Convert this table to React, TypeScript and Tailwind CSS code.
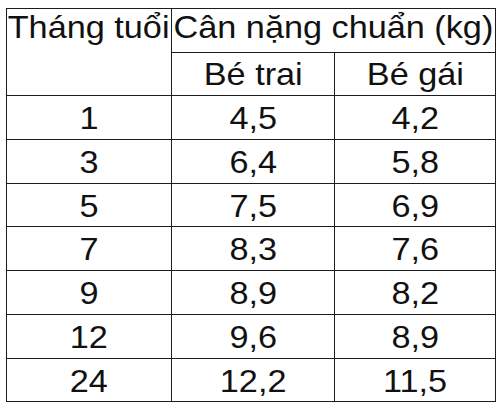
const rows: [string, string, string][] = [
  ['1', '4,5', '4,2'],
  ['3', '6,4', '5,8'],
  ['5', '7,5', '6,9'],
  ['7', '8,3', '7,6'],
  ['9', '8,9', '8,2'],
  ['12', '9,6', '8,9'],
  ['24', '12,2', '11,5'],
];

function Txt({ children }: { children: React.ReactNode }) {
  return <span className="inline-block origin-center scale-x-[1.07] whitespace-nowrap leading-none">{children}</span>;
}

export default function App() {
  return (
    <div className="h-[409px] w-[500px] bg-white pl-[6px] pt-[8px] font-['Liberation_Sans',Arial,sans-serif] text-[32px] text-[#111]">
      <div className="grid w-[490px] grid-cols-[164px_162px_160px] grid-rows-[43px_42px_43px_43px_42px_43px_43px_43px_42px] gap-px border border-[#1c1c1c] bg-[#1c1c1c]">
        <div className="row-span-2 flex justify-center bg-white pt-[2px]">
          <Txt>Tháng tuổi</Txt>
        </div>
        <div className="col-span-2 flex justify-center bg-white pt-[2px]">
          <Txt>Cân nặng chuẩn (kg)</Txt>
        </div>
        <div className="flex items-center justify-center bg-white">
          <Txt>Bé trai</Txt>
        </div>
        <div className="flex items-center justify-center bg-white">
          <Txt>Bé gái</Txt>
        </div>
        {rows.map((r) =>
          r.map((v, i) => (
            <div key={r[0] + '-' + i} className="flex items-center justify-center bg-white pt-px">
              <Txt>{v}</Txt>
            </div>
          ))
        )}
      </div>
    </div>
  );
}
